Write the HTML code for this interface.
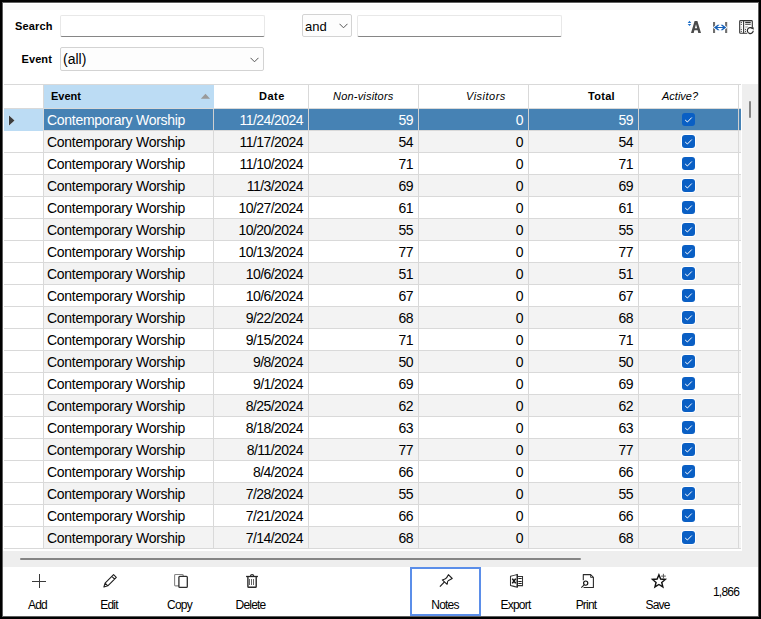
<!DOCTYPE html><html><head><meta charset="utf-8"><style>
*{margin:0;padding:0;box-sizing:border-box}
html,body{width:761px;height:619px;overflow:hidden;background:#000}
body{position:relative;font-family:"Liberation Sans",sans-serif;color:#000}
.d{position:absolute}
.t{position:absolute;white-space:nowrap;line-height:1}
.r{text-align:right}
.c{text-align:center}
</style></head><body>
<div class="d" style="left:2px;top:2px;width:757px;height:615px;background:#5e5e5e"></div>
<div class="d" style="left:3px;top:3px;width:755px;height:613px;background:#fff"></div>
<div class="d" style="left:4px;top:4px;width:753px;height:6px;background:#f8f8f8"></div>

<div class="t" style="left:15px;top:20px;font:bold 11px 'Liberation Sans';letter-spacing:0.15px">Search</div>
<div class="t" style="left:21.5px;top:53px;font:bold 11px 'Liberation Sans';letter-spacing:0.1px">Event</div>
<div class="d" style="left:60px;top:15px;width:205px;height:22px;border:1px solid #e8e8e8;border-bottom:1px solid #868686;border-radius:2px;background:#fff"></div>
<div class="d" style="left:357px;top:15px;width:205px;height:22px;border:1px solid #e8e8e8;border-bottom:1px solid #868686;border-radius:2px;background:#fff"></div>
<div class="d" style="left:302px;top:14px;width:50px;height:23px;border:1px solid #d3d3d3;border-radius:2px;background:#fdfdfd"></div>
<div class="d" style="left:60px;top:47px;width:204px;height:24px;border:1px solid #d3d3d3;border-radius:2px;background:#fdfdfd"></div>
<svg class="d" style="left:338.5px;top:23px" width="9" height="6" viewBox="0 0 9 6"><path d="M0.5 0.8 L4.5 4.8 L8.5 0.8" fill="none" stroke="#555" stroke-width="1"/></svg>
<svg class="d" style="left:250.25px;top:57px" width="9" height="6" viewBox="0 0 9 6"><path d="M0.5 0.8 L4.5 4.8 L8.5 0.8" fill="none" stroke="#555" stroke-width="1"/></svg>
<div class="t" style="left:305px;top:19px;font:13px 'Liberation Sans'">and</div>
<div class="t" style="left:63px;top:51px;font:14px 'Liberation Sans'">(all)</div>
<svg class="d" style="left:684px;top:16px" width="20" height="20" viewBox="684 16 20 20"><path d="M687.7 22.9 L689.5 20.7 L691.3 22.9 Z M687.7 24.0 L691.3 24.0 L689.5 26.1 Z" fill="#1f6fc8"/><path fill-rule="evenodd" d="M691 33 L694.6 21.1 H697.4 L701 33 H698.3 L697.6 30.3 H694.4 L693.7 33 Z M694.9 28.3 H697.1 L696 24.2 Z" fill="#4a4a4a"/></svg>
<svg class="d" style="left:710px;top:19px" width="20" height="16" viewBox="710 19 20 16"><rect x="713" y="22" width="2.1" height="11" fill="#6e6e6e"/><rect x="725.1" y="22" width="2.1" height="11" fill="#6e6e6e"/><path d="M713.9 27.5 L717.7 24.8 H719.6 L717.1 26.9 H723.1 L720.6 24.8 H722.5 L726.3 27.5 L722.5 30.2 H720.6 L723.1 28.1 H717.1 L719.6 30.2 H717.7 Z" fill="#1560b8" stroke="#fff" stroke-width="1.6" stroke-linejoin="round" paint-order="stroke"/></svg>
<svg class="d" style="left:736px;top:17px" width="20" height="20" viewBox="736 17 20 20"><rect x="739.7" y="20.6" width="12.6" height="12.7" rx="0.8" fill="none" stroke="#333" stroke-width="1.1"/><path d="M743.6 20.6 V33.3" stroke="#333" stroke-width="1.1"/><path d="M741.3 22.4 h0.01 M741.3 24.3 h0.01 M741.3 29.3 h0.01 M741.3 31.3 h0.01 M745.5 29.3 h0.01 M745.5 31.3 h0.01" stroke="#333" stroke-width="1.2" stroke-linecap="round"/><path d="M741.3 27 h0.01" stroke="#aaa" stroke-width="1.1" stroke-linecap="round"/><path d="M745.2 22.4 H750.7 M745.2 24.3 H750.7" stroke="#333" stroke-width="1.1"/><path d="M745.2 27 H748" stroke="#999" stroke-width="1"/><circle cx="750.3" cy="30.8" r="4" fill="#fff"/><path d="M752.4 28.5 A2.95 2.95 0 1 0 753.25 30.8" fill="none" stroke="#2a2a2a" stroke-width="1.25"/><path d="M751.3 27.3 L753.7 27.6 L753.4 30 Z" fill="#111"/></svg>
<div class="d" style="left:4px;top:84px;width:737px;height:1px;background:#d9d9d9"></div>
<div class="d" style="left:44px;top:85px;width:170px;height:23px;background:#bcdcf4"></div>
<div class="d" style="left:43px;top:85px;width:1px;height:23px;background:#d9d9d9"></div>
<div class="d" style="left:308px;top:85px;width:1px;height:23px;background:#d9d9d9"></div>
<div class="d" style="left:418px;top:85px;width:1px;height:23px;background:#d9d9d9"></div>
<div class="d" style="left:528px;top:85px;width:1px;height:23px;background:#d9d9d9"></div>
<div class="d" style="left:638px;top:85px;width:1px;height:23px;background:#d9d9d9"></div>
<div class="d" style="left:738px;top:85px;width:1px;height:23px;background:#d9d9d9"></div>
<div class="d" style="left:4px;top:108px;width:737px;height:1px;background:#d9d9d9"></div>
<div class="t" style="left:51px;top:90px;font:bold 11px 'Liberation Sans'">Event</div>
<svg class="d" style="left:199px;top:92px" width="14" height="9" viewBox="199 92 14 9"><path d="M200.8 98.8 L205.45 93.8 L210.1 98.8 Z" fill="#9a9a9a"/></svg>
<div class="t" style="left:259px;top:90px;font:bold 11px 'Liberation Sans';letter-spacing:0.5px">Date</div>
<div class="t" style="left:333px;top:90px;font:italic 11px 'Liberation Sans';letter-spacing:0.2px">Non-visitors</div>
<div class="t" style="left:466px;top:90px;font:italic 11px 'Liberation Sans';letter-spacing:0.5px">Visitors</div>
<div class="t" style="left:588px;top:90px;font:bold 11px 'Liberation Sans';letter-spacing:0.3px">Total</div>
<div class="t" style="left:662px;top:90px;font:italic 11px 'Liberation Sans'">Active?</div>
<div class="d" style="left:4px;top:109px;width:39px;height:22px;background:#bcdcf4"></div>
<div class="d" style="left:44px;top:109px;width:697px;height:21px;background:#4682b4"></div>
<svg class="d" style="left:8px;top:115px" width="8" height="11" viewBox="0 0 8 11"><path d="M1 0.5 L6.5 5.5 L1 10.5 Z" fill="#3c3c3c" stroke="#fff" stroke-width="0.7" stroke-opacity="0.6" paint-order="stroke"/></svg>
<div class="d" style="left:4px;top:130px;width:737px;height:1px;background:#d9d9d9"></div>
<div class="d" style="left:4px;top:130px;width:39px;height:1px;background:#bcdcf4"></div>
<div class="d" style="left:43px;top:109px;width:1px;height:21px;background:#d9d9d9"></div>
<div class="d" style="left:213px;top:109px;width:1px;height:21px;background:#d0d0d0"></div>
<div class="d" style="left:308px;top:109px;width:1px;height:21px;background:#d0d0d0"></div>
<div class="d" style="left:418px;top:109px;width:1px;height:21px;background:#d0d0d0"></div>
<div class="d" style="left:528px;top:109px;width:1px;height:21px;background:#d0d0d0"></div>
<div class="d" style="left:638px;top:109px;width:1px;height:21px;background:#d0d0d0"></div>
<div class="d" style="left:738px;top:109px;width:1px;height:21px;background:#d0d0d0"></div>
<div class="t" style="left:47px;top:112px;font:14px 'Liberation Sans';letter-spacing:-0.28px;color:#fff">Contemporary Worship</div>
<div class="t r" style="right:458px;top:112px;font:14px 'Liberation Sans';letter-spacing:-0.55px;color:#fff">11/24/2024</div>
<div class="t r" style="right:348px;top:112px;font:14px 'Liberation Sans';letter-spacing:-0.55px;color:#fff">59</div>
<div class="t r" style="right:238px;top:112px;font:14px 'Liberation Sans';letter-spacing:-0.55px;color:#fff">0</div>
<div class="t r" style="right:128px;top:112px;font:14px 'Liberation Sans';letter-spacing:-0.55px;color:#fff">59</div>
<div class="d" style="left:682px;top:113px;width:13px;height:13px;border-radius:3px;background:#0a5fc4;"></div>
<svg class="d" style="left:682px;top:113px" width="13" height="13" viewBox="0 0 13 13"><path d="M3.2 7 L5.4 9 L9.8 4.5" fill="none" stroke="#fff" stroke-width="1"/></svg>
<div class="d" style="left:44px;top:131px;width:697px;height:21px;background:#f3f3f3"></div>
<div class="d" style="left:4px;top:152px;width:737px;height:1px;background:#d9d9d9"></div>
<div class="d" style="left:43px;top:131px;width:1px;height:21px;background:#d9d9d9"></div>
<div class="d" style="left:213px;top:131px;width:1px;height:21px;background:#d9d9d9"></div>
<div class="d" style="left:308px;top:131px;width:1px;height:21px;background:#d9d9d9"></div>
<div class="d" style="left:418px;top:131px;width:1px;height:21px;background:#d9d9d9"></div>
<div class="d" style="left:528px;top:131px;width:1px;height:21px;background:#d9d9d9"></div>
<div class="d" style="left:638px;top:131px;width:1px;height:21px;background:#d9d9d9"></div>
<div class="d" style="left:738px;top:131px;width:1px;height:21px;background:#d9d9d9"></div>
<div class="t" style="left:47px;top:134px;font:14px 'Liberation Sans';letter-spacing:-0.28px;color:#000">Contemporary Worship</div>
<div class="t r" style="right:458px;top:134px;font:14px 'Liberation Sans';letter-spacing:-0.55px;color:#000">11/17/2024</div>
<div class="t r" style="right:348px;top:134px;font:14px 'Liberation Sans';letter-spacing:-0.55px;color:#000">54</div>
<div class="t r" style="right:238px;top:134px;font:14px 'Liberation Sans';letter-spacing:-0.55px;color:#000">0</div>
<div class="t r" style="right:128px;top:134px;font:14px 'Liberation Sans';letter-spacing:-0.55px;color:#000">54</div>
<div class="d" style="left:682px;top:135px;width:13px;height:13px;border-radius:3px;background:#0a5fc4;box-shadow:0 0 0 1px #fff;"></div>
<svg class="d" style="left:682px;top:135px" width="13" height="13" viewBox="0 0 13 13"><path d="M3.2 7 L5.4 9 L9.8 4.5" fill="none" stroke="#fff" stroke-width="1"/></svg>
<div class="d" style="left:4px;top:174px;width:737px;height:1px;background:#d9d9d9"></div>
<div class="d" style="left:43px;top:153px;width:1px;height:21px;background:#d9d9d9"></div>
<div class="d" style="left:213px;top:153px;width:1px;height:21px;background:#d9d9d9"></div>
<div class="d" style="left:308px;top:153px;width:1px;height:21px;background:#d9d9d9"></div>
<div class="d" style="left:418px;top:153px;width:1px;height:21px;background:#d9d9d9"></div>
<div class="d" style="left:528px;top:153px;width:1px;height:21px;background:#d9d9d9"></div>
<div class="d" style="left:638px;top:153px;width:1px;height:21px;background:#d9d9d9"></div>
<div class="d" style="left:738px;top:153px;width:1px;height:21px;background:#d9d9d9"></div>
<div class="t" style="left:47px;top:156px;font:14px 'Liberation Sans';letter-spacing:-0.28px;color:#000">Contemporary Worship</div>
<div class="t r" style="right:458px;top:156px;font:14px 'Liberation Sans';letter-spacing:-0.55px;color:#000">11/10/2024</div>
<div class="t r" style="right:348px;top:156px;font:14px 'Liberation Sans';letter-spacing:-0.55px;color:#000">71</div>
<div class="t r" style="right:238px;top:156px;font:14px 'Liberation Sans';letter-spacing:-0.55px;color:#000">0</div>
<div class="t r" style="right:128px;top:156px;font:14px 'Liberation Sans';letter-spacing:-0.55px;color:#000">71</div>
<div class="d" style="left:682px;top:157px;width:13px;height:13px;border-radius:3px;background:#0a5fc4;box-shadow:0 0 0 1px #fff;"></div>
<svg class="d" style="left:682px;top:157px" width="13" height="13" viewBox="0 0 13 13"><path d="M3.2 7 L5.4 9 L9.8 4.5" fill="none" stroke="#fff" stroke-width="1"/></svg>
<div class="d" style="left:44px;top:175px;width:697px;height:21px;background:#f3f3f3"></div>
<div class="d" style="left:4px;top:196px;width:737px;height:1px;background:#d9d9d9"></div>
<div class="d" style="left:43px;top:175px;width:1px;height:21px;background:#d9d9d9"></div>
<div class="d" style="left:213px;top:175px;width:1px;height:21px;background:#d9d9d9"></div>
<div class="d" style="left:308px;top:175px;width:1px;height:21px;background:#d9d9d9"></div>
<div class="d" style="left:418px;top:175px;width:1px;height:21px;background:#d9d9d9"></div>
<div class="d" style="left:528px;top:175px;width:1px;height:21px;background:#d9d9d9"></div>
<div class="d" style="left:638px;top:175px;width:1px;height:21px;background:#d9d9d9"></div>
<div class="d" style="left:738px;top:175px;width:1px;height:21px;background:#d9d9d9"></div>
<div class="t" style="left:47px;top:178px;font:14px 'Liberation Sans';letter-spacing:-0.28px;color:#000">Contemporary Worship</div>
<div class="t r" style="right:458px;top:178px;font:14px 'Liberation Sans';letter-spacing:-0.55px;color:#000">11/3/2024</div>
<div class="t r" style="right:348px;top:178px;font:14px 'Liberation Sans';letter-spacing:-0.55px;color:#000">69</div>
<div class="t r" style="right:238px;top:178px;font:14px 'Liberation Sans';letter-spacing:-0.55px;color:#000">0</div>
<div class="t r" style="right:128px;top:178px;font:14px 'Liberation Sans';letter-spacing:-0.55px;color:#000">69</div>
<div class="d" style="left:682px;top:179px;width:13px;height:13px;border-radius:3px;background:#0a5fc4;box-shadow:0 0 0 1px #fff;"></div>
<svg class="d" style="left:682px;top:179px" width="13" height="13" viewBox="0 0 13 13"><path d="M3.2 7 L5.4 9 L9.8 4.5" fill="none" stroke="#fff" stroke-width="1"/></svg>
<div class="d" style="left:4px;top:218px;width:737px;height:1px;background:#d9d9d9"></div>
<div class="d" style="left:43px;top:197px;width:1px;height:21px;background:#d9d9d9"></div>
<div class="d" style="left:213px;top:197px;width:1px;height:21px;background:#d9d9d9"></div>
<div class="d" style="left:308px;top:197px;width:1px;height:21px;background:#d9d9d9"></div>
<div class="d" style="left:418px;top:197px;width:1px;height:21px;background:#d9d9d9"></div>
<div class="d" style="left:528px;top:197px;width:1px;height:21px;background:#d9d9d9"></div>
<div class="d" style="left:638px;top:197px;width:1px;height:21px;background:#d9d9d9"></div>
<div class="d" style="left:738px;top:197px;width:1px;height:21px;background:#d9d9d9"></div>
<div class="t" style="left:47px;top:200px;font:14px 'Liberation Sans';letter-spacing:-0.28px;color:#000">Contemporary Worship</div>
<div class="t r" style="right:458px;top:200px;font:14px 'Liberation Sans';letter-spacing:-0.55px;color:#000">10/27/2024</div>
<div class="t r" style="right:348px;top:200px;font:14px 'Liberation Sans';letter-spacing:-0.55px;color:#000">61</div>
<div class="t r" style="right:238px;top:200px;font:14px 'Liberation Sans';letter-spacing:-0.55px;color:#000">0</div>
<div class="t r" style="right:128px;top:200px;font:14px 'Liberation Sans';letter-spacing:-0.55px;color:#000">61</div>
<div class="d" style="left:682px;top:201px;width:13px;height:13px;border-radius:3px;background:#0a5fc4;box-shadow:0 0 0 1px #fff;"></div>
<svg class="d" style="left:682px;top:201px" width="13" height="13" viewBox="0 0 13 13"><path d="M3.2 7 L5.4 9 L9.8 4.5" fill="none" stroke="#fff" stroke-width="1"/></svg>
<div class="d" style="left:44px;top:219px;width:697px;height:21px;background:#f3f3f3"></div>
<div class="d" style="left:4px;top:240px;width:737px;height:1px;background:#d9d9d9"></div>
<div class="d" style="left:43px;top:219px;width:1px;height:21px;background:#d9d9d9"></div>
<div class="d" style="left:213px;top:219px;width:1px;height:21px;background:#d9d9d9"></div>
<div class="d" style="left:308px;top:219px;width:1px;height:21px;background:#d9d9d9"></div>
<div class="d" style="left:418px;top:219px;width:1px;height:21px;background:#d9d9d9"></div>
<div class="d" style="left:528px;top:219px;width:1px;height:21px;background:#d9d9d9"></div>
<div class="d" style="left:638px;top:219px;width:1px;height:21px;background:#d9d9d9"></div>
<div class="d" style="left:738px;top:219px;width:1px;height:21px;background:#d9d9d9"></div>
<div class="t" style="left:47px;top:222px;font:14px 'Liberation Sans';letter-spacing:-0.28px;color:#000">Contemporary Worship</div>
<div class="t r" style="right:458px;top:222px;font:14px 'Liberation Sans';letter-spacing:-0.55px;color:#000">10/20/2024</div>
<div class="t r" style="right:348px;top:222px;font:14px 'Liberation Sans';letter-spacing:-0.55px;color:#000">55</div>
<div class="t r" style="right:238px;top:222px;font:14px 'Liberation Sans';letter-spacing:-0.55px;color:#000">0</div>
<div class="t r" style="right:128px;top:222px;font:14px 'Liberation Sans';letter-spacing:-0.55px;color:#000">55</div>
<div class="d" style="left:682px;top:223px;width:13px;height:13px;border-radius:3px;background:#0a5fc4;box-shadow:0 0 0 1px #fff;"></div>
<svg class="d" style="left:682px;top:223px" width="13" height="13" viewBox="0 0 13 13"><path d="M3.2 7 L5.4 9 L9.8 4.5" fill="none" stroke="#fff" stroke-width="1"/></svg>
<div class="d" style="left:4px;top:262px;width:737px;height:1px;background:#d9d9d9"></div>
<div class="d" style="left:43px;top:241px;width:1px;height:21px;background:#d9d9d9"></div>
<div class="d" style="left:213px;top:241px;width:1px;height:21px;background:#d9d9d9"></div>
<div class="d" style="left:308px;top:241px;width:1px;height:21px;background:#d9d9d9"></div>
<div class="d" style="left:418px;top:241px;width:1px;height:21px;background:#d9d9d9"></div>
<div class="d" style="left:528px;top:241px;width:1px;height:21px;background:#d9d9d9"></div>
<div class="d" style="left:638px;top:241px;width:1px;height:21px;background:#d9d9d9"></div>
<div class="d" style="left:738px;top:241px;width:1px;height:21px;background:#d9d9d9"></div>
<div class="t" style="left:47px;top:244px;font:14px 'Liberation Sans';letter-spacing:-0.28px;color:#000">Contemporary Worship</div>
<div class="t r" style="right:458px;top:244px;font:14px 'Liberation Sans';letter-spacing:-0.55px;color:#000">10/13/2024</div>
<div class="t r" style="right:348px;top:244px;font:14px 'Liberation Sans';letter-spacing:-0.55px;color:#000">77</div>
<div class="t r" style="right:238px;top:244px;font:14px 'Liberation Sans';letter-spacing:-0.55px;color:#000">0</div>
<div class="t r" style="right:128px;top:244px;font:14px 'Liberation Sans';letter-spacing:-0.55px;color:#000">77</div>
<div class="d" style="left:682px;top:245px;width:13px;height:13px;border-radius:3px;background:#0a5fc4;box-shadow:0 0 0 1px #fff;"></div>
<svg class="d" style="left:682px;top:245px" width="13" height="13" viewBox="0 0 13 13"><path d="M3.2 7 L5.4 9 L9.8 4.5" fill="none" stroke="#fff" stroke-width="1"/></svg>
<div class="d" style="left:44px;top:263px;width:697px;height:21px;background:#f3f3f3"></div>
<div class="d" style="left:4px;top:284px;width:737px;height:1px;background:#d9d9d9"></div>
<div class="d" style="left:43px;top:263px;width:1px;height:21px;background:#d9d9d9"></div>
<div class="d" style="left:213px;top:263px;width:1px;height:21px;background:#d9d9d9"></div>
<div class="d" style="left:308px;top:263px;width:1px;height:21px;background:#d9d9d9"></div>
<div class="d" style="left:418px;top:263px;width:1px;height:21px;background:#d9d9d9"></div>
<div class="d" style="left:528px;top:263px;width:1px;height:21px;background:#d9d9d9"></div>
<div class="d" style="left:638px;top:263px;width:1px;height:21px;background:#d9d9d9"></div>
<div class="d" style="left:738px;top:263px;width:1px;height:21px;background:#d9d9d9"></div>
<div class="t" style="left:47px;top:266px;font:14px 'Liberation Sans';letter-spacing:-0.28px;color:#000">Contemporary Worship</div>
<div class="t r" style="right:458px;top:266px;font:14px 'Liberation Sans';letter-spacing:-0.55px;color:#000">10/6/2024</div>
<div class="t r" style="right:348px;top:266px;font:14px 'Liberation Sans';letter-spacing:-0.55px;color:#000">51</div>
<div class="t r" style="right:238px;top:266px;font:14px 'Liberation Sans';letter-spacing:-0.55px;color:#000">0</div>
<div class="t r" style="right:128px;top:266px;font:14px 'Liberation Sans';letter-spacing:-0.55px;color:#000">51</div>
<div class="d" style="left:682px;top:267px;width:13px;height:13px;border-radius:3px;background:#0a5fc4;box-shadow:0 0 0 1px #fff;"></div>
<svg class="d" style="left:682px;top:267px" width="13" height="13" viewBox="0 0 13 13"><path d="M3.2 7 L5.4 9 L9.8 4.5" fill="none" stroke="#fff" stroke-width="1"/></svg>
<div class="d" style="left:4px;top:306px;width:737px;height:1px;background:#d9d9d9"></div>
<div class="d" style="left:43px;top:285px;width:1px;height:21px;background:#d9d9d9"></div>
<div class="d" style="left:213px;top:285px;width:1px;height:21px;background:#d9d9d9"></div>
<div class="d" style="left:308px;top:285px;width:1px;height:21px;background:#d9d9d9"></div>
<div class="d" style="left:418px;top:285px;width:1px;height:21px;background:#d9d9d9"></div>
<div class="d" style="left:528px;top:285px;width:1px;height:21px;background:#d9d9d9"></div>
<div class="d" style="left:638px;top:285px;width:1px;height:21px;background:#d9d9d9"></div>
<div class="d" style="left:738px;top:285px;width:1px;height:21px;background:#d9d9d9"></div>
<div class="t" style="left:47px;top:288px;font:14px 'Liberation Sans';letter-spacing:-0.28px;color:#000">Contemporary Worship</div>
<div class="t r" style="right:458px;top:288px;font:14px 'Liberation Sans';letter-spacing:-0.55px;color:#000">10/6/2024</div>
<div class="t r" style="right:348px;top:288px;font:14px 'Liberation Sans';letter-spacing:-0.55px;color:#000">67</div>
<div class="t r" style="right:238px;top:288px;font:14px 'Liberation Sans';letter-spacing:-0.55px;color:#000">0</div>
<div class="t r" style="right:128px;top:288px;font:14px 'Liberation Sans';letter-spacing:-0.55px;color:#000">67</div>
<div class="d" style="left:682px;top:289px;width:13px;height:13px;border-radius:3px;background:#0a5fc4;box-shadow:0 0 0 1px #fff;"></div>
<svg class="d" style="left:682px;top:289px" width="13" height="13" viewBox="0 0 13 13"><path d="M3.2 7 L5.4 9 L9.8 4.5" fill="none" stroke="#fff" stroke-width="1"/></svg>
<div class="d" style="left:44px;top:307px;width:697px;height:21px;background:#f3f3f3"></div>
<div class="d" style="left:4px;top:328px;width:737px;height:1px;background:#d9d9d9"></div>
<div class="d" style="left:43px;top:307px;width:1px;height:21px;background:#d9d9d9"></div>
<div class="d" style="left:213px;top:307px;width:1px;height:21px;background:#d9d9d9"></div>
<div class="d" style="left:308px;top:307px;width:1px;height:21px;background:#d9d9d9"></div>
<div class="d" style="left:418px;top:307px;width:1px;height:21px;background:#d9d9d9"></div>
<div class="d" style="left:528px;top:307px;width:1px;height:21px;background:#d9d9d9"></div>
<div class="d" style="left:638px;top:307px;width:1px;height:21px;background:#d9d9d9"></div>
<div class="d" style="left:738px;top:307px;width:1px;height:21px;background:#d9d9d9"></div>
<div class="t" style="left:47px;top:310px;font:14px 'Liberation Sans';letter-spacing:-0.28px;color:#000">Contemporary Worship</div>
<div class="t r" style="right:458px;top:310px;font:14px 'Liberation Sans';letter-spacing:-0.55px;color:#000">9/22/2024</div>
<div class="t r" style="right:348px;top:310px;font:14px 'Liberation Sans';letter-spacing:-0.55px;color:#000">68</div>
<div class="t r" style="right:238px;top:310px;font:14px 'Liberation Sans';letter-spacing:-0.55px;color:#000">0</div>
<div class="t r" style="right:128px;top:310px;font:14px 'Liberation Sans';letter-spacing:-0.55px;color:#000">68</div>
<div class="d" style="left:682px;top:311px;width:13px;height:13px;border-radius:3px;background:#0a5fc4;box-shadow:0 0 0 1px #fff;"></div>
<svg class="d" style="left:682px;top:311px" width="13" height="13" viewBox="0 0 13 13"><path d="M3.2 7 L5.4 9 L9.8 4.5" fill="none" stroke="#fff" stroke-width="1"/></svg>
<div class="d" style="left:4px;top:350px;width:737px;height:1px;background:#d9d9d9"></div>
<div class="d" style="left:43px;top:329px;width:1px;height:21px;background:#d9d9d9"></div>
<div class="d" style="left:213px;top:329px;width:1px;height:21px;background:#d9d9d9"></div>
<div class="d" style="left:308px;top:329px;width:1px;height:21px;background:#d9d9d9"></div>
<div class="d" style="left:418px;top:329px;width:1px;height:21px;background:#d9d9d9"></div>
<div class="d" style="left:528px;top:329px;width:1px;height:21px;background:#d9d9d9"></div>
<div class="d" style="left:638px;top:329px;width:1px;height:21px;background:#d9d9d9"></div>
<div class="d" style="left:738px;top:329px;width:1px;height:21px;background:#d9d9d9"></div>
<div class="t" style="left:47px;top:332px;font:14px 'Liberation Sans';letter-spacing:-0.28px;color:#000">Contemporary Worship</div>
<div class="t r" style="right:458px;top:332px;font:14px 'Liberation Sans';letter-spacing:-0.55px;color:#000">9/15/2024</div>
<div class="t r" style="right:348px;top:332px;font:14px 'Liberation Sans';letter-spacing:-0.55px;color:#000">71</div>
<div class="t r" style="right:238px;top:332px;font:14px 'Liberation Sans';letter-spacing:-0.55px;color:#000">0</div>
<div class="t r" style="right:128px;top:332px;font:14px 'Liberation Sans';letter-spacing:-0.55px;color:#000">71</div>
<div class="d" style="left:682px;top:333px;width:13px;height:13px;border-radius:3px;background:#0a5fc4;box-shadow:0 0 0 1px #fff;"></div>
<svg class="d" style="left:682px;top:333px" width="13" height="13" viewBox="0 0 13 13"><path d="M3.2 7 L5.4 9 L9.8 4.5" fill="none" stroke="#fff" stroke-width="1"/></svg>
<div class="d" style="left:44px;top:351px;width:697px;height:21px;background:#f3f3f3"></div>
<div class="d" style="left:4px;top:372px;width:737px;height:1px;background:#d9d9d9"></div>
<div class="d" style="left:43px;top:351px;width:1px;height:21px;background:#d9d9d9"></div>
<div class="d" style="left:213px;top:351px;width:1px;height:21px;background:#d9d9d9"></div>
<div class="d" style="left:308px;top:351px;width:1px;height:21px;background:#d9d9d9"></div>
<div class="d" style="left:418px;top:351px;width:1px;height:21px;background:#d9d9d9"></div>
<div class="d" style="left:528px;top:351px;width:1px;height:21px;background:#d9d9d9"></div>
<div class="d" style="left:638px;top:351px;width:1px;height:21px;background:#d9d9d9"></div>
<div class="d" style="left:738px;top:351px;width:1px;height:21px;background:#d9d9d9"></div>
<div class="t" style="left:47px;top:354px;font:14px 'Liberation Sans';letter-spacing:-0.28px;color:#000">Contemporary Worship</div>
<div class="t r" style="right:458px;top:354px;font:14px 'Liberation Sans';letter-spacing:-0.55px;color:#000">9/8/2024</div>
<div class="t r" style="right:348px;top:354px;font:14px 'Liberation Sans';letter-spacing:-0.55px;color:#000">50</div>
<div class="t r" style="right:238px;top:354px;font:14px 'Liberation Sans';letter-spacing:-0.55px;color:#000">0</div>
<div class="t r" style="right:128px;top:354px;font:14px 'Liberation Sans';letter-spacing:-0.55px;color:#000">50</div>
<div class="d" style="left:682px;top:355px;width:13px;height:13px;border-radius:3px;background:#0a5fc4;box-shadow:0 0 0 1px #fff;"></div>
<svg class="d" style="left:682px;top:355px" width="13" height="13" viewBox="0 0 13 13"><path d="M3.2 7 L5.4 9 L9.8 4.5" fill="none" stroke="#fff" stroke-width="1"/></svg>
<div class="d" style="left:4px;top:394px;width:737px;height:1px;background:#d9d9d9"></div>
<div class="d" style="left:43px;top:373px;width:1px;height:21px;background:#d9d9d9"></div>
<div class="d" style="left:213px;top:373px;width:1px;height:21px;background:#d9d9d9"></div>
<div class="d" style="left:308px;top:373px;width:1px;height:21px;background:#d9d9d9"></div>
<div class="d" style="left:418px;top:373px;width:1px;height:21px;background:#d9d9d9"></div>
<div class="d" style="left:528px;top:373px;width:1px;height:21px;background:#d9d9d9"></div>
<div class="d" style="left:638px;top:373px;width:1px;height:21px;background:#d9d9d9"></div>
<div class="d" style="left:738px;top:373px;width:1px;height:21px;background:#d9d9d9"></div>
<div class="t" style="left:47px;top:376px;font:14px 'Liberation Sans';letter-spacing:-0.28px;color:#000">Contemporary Worship</div>
<div class="t r" style="right:458px;top:376px;font:14px 'Liberation Sans';letter-spacing:-0.55px;color:#000">9/1/2024</div>
<div class="t r" style="right:348px;top:376px;font:14px 'Liberation Sans';letter-spacing:-0.55px;color:#000">69</div>
<div class="t r" style="right:238px;top:376px;font:14px 'Liberation Sans';letter-spacing:-0.55px;color:#000">0</div>
<div class="t r" style="right:128px;top:376px;font:14px 'Liberation Sans';letter-spacing:-0.55px;color:#000">69</div>
<div class="d" style="left:682px;top:377px;width:13px;height:13px;border-radius:3px;background:#0a5fc4;box-shadow:0 0 0 1px #fff;"></div>
<svg class="d" style="left:682px;top:377px" width="13" height="13" viewBox="0 0 13 13"><path d="M3.2 7 L5.4 9 L9.8 4.5" fill="none" stroke="#fff" stroke-width="1"/></svg>
<div class="d" style="left:44px;top:395px;width:697px;height:21px;background:#f3f3f3"></div>
<div class="d" style="left:4px;top:416px;width:737px;height:1px;background:#d9d9d9"></div>
<div class="d" style="left:43px;top:395px;width:1px;height:21px;background:#d9d9d9"></div>
<div class="d" style="left:213px;top:395px;width:1px;height:21px;background:#d9d9d9"></div>
<div class="d" style="left:308px;top:395px;width:1px;height:21px;background:#d9d9d9"></div>
<div class="d" style="left:418px;top:395px;width:1px;height:21px;background:#d9d9d9"></div>
<div class="d" style="left:528px;top:395px;width:1px;height:21px;background:#d9d9d9"></div>
<div class="d" style="left:638px;top:395px;width:1px;height:21px;background:#d9d9d9"></div>
<div class="d" style="left:738px;top:395px;width:1px;height:21px;background:#d9d9d9"></div>
<div class="t" style="left:47px;top:398px;font:14px 'Liberation Sans';letter-spacing:-0.28px;color:#000">Contemporary Worship</div>
<div class="t r" style="right:458px;top:398px;font:14px 'Liberation Sans';letter-spacing:-0.55px;color:#000">8/25/2024</div>
<div class="t r" style="right:348px;top:398px;font:14px 'Liberation Sans';letter-spacing:-0.55px;color:#000">62</div>
<div class="t r" style="right:238px;top:398px;font:14px 'Liberation Sans';letter-spacing:-0.55px;color:#000">0</div>
<div class="t r" style="right:128px;top:398px;font:14px 'Liberation Sans';letter-spacing:-0.55px;color:#000">62</div>
<div class="d" style="left:682px;top:399px;width:13px;height:13px;border-radius:3px;background:#0a5fc4;box-shadow:0 0 0 1px #fff;"></div>
<svg class="d" style="left:682px;top:399px" width="13" height="13" viewBox="0 0 13 13"><path d="M3.2 7 L5.4 9 L9.8 4.5" fill="none" stroke="#fff" stroke-width="1"/></svg>
<div class="d" style="left:4px;top:438px;width:737px;height:1px;background:#d9d9d9"></div>
<div class="d" style="left:43px;top:417px;width:1px;height:21px;background:#d9d9d9"></div>
<div class="d" style="left:213px;top:417px;width:1px;height:21px;background:#d9d9d9"></div>
<div class="d" style="left:308px;top:417px;width:1px;height:21px;background:#d9d9d9"></div>
<div class="d" style="left:418px;top:417px;width:1px;height:21px;background:#d9d9d9"></div>
<div class="d" style="left:528px;top:417px;width:1px;height:21px;background:#d9d9d9"></div>
<div class="d" style="left:638px;top:417px;width:1px;height:21px;background:#d9d9d9"></div>
<div class="d" style="left:738px;top:417px;width:1px;height:21px;background:#d9d9d9"></div>
<div class="t" style="left:47px;top:420px;font:14px 'Liberation Sans';letter-spacing:-0.28px;color:#000">Contemporary Worship</div>
<div class="t r" style="right:458px;top:420px;font:14px 'Liberation Sans';letter-spacing:-0.55px;color:#000">8/18/2024</div>
<div class="t r" style="right:348px;top:420px;font:14px 'Liberation Sans';letter-spacing:-0.55px;color:#000">63</div>
<div class="t r" style="right:238px;top:420px;font:14px 'Liberation Sans';letter-spacing:-0.55px;color:#000">0</div>
<div class="t r" style="right:128px;top:420px;font:14px 'Liberation Sans';letter-spacing:-0.55px;color:#000">63</div>
<div class="d" style="left:682px;top:421px;width:13px;height:13px;border-radius:3px;background:#0a5fc4;box-shadow:0 0 0 1px #fff;"></div>
<svg class="d" style="left:682px;top:421px" width="13" height="13" viewBox="0 0 13 13"><path d="M3.2 7 L5.4 9 L9.8 4.5" fill="none" stroke="#fff" stroke-width="1"/></svg>
<div class="d" style="left:44px;top:439px;width:697px;height:21px;background:#f3f3f3"></div>
<div class="d" style="left:4px;top:460px;width:737px;height:1px;background:#d9d9d9"></div>
<div class="d" style="left:43px;top:439px;width:1px;height:21px;background:#d9d9d9"></div>
<div class="d" style="left:213px;top:439px;width:1px;height:21px;background:#d9d9d9"></div>
<div class="d" style="left:308px;top:439px;width:1px;height:21px;background:#d9d9d9"></div>
<div class="d" style="left:418px;top:439px;width:1px;height:21px;background:#d9d9d9"></div>
<div class="d" style="left:528px;top:439px;width:1px;height:21px;background:#d9d9d9"></div>
<div class="d" style="left:638px;top:439px;width:1px;height:21px;background:#d9d9d9"></div>
<div class="d" style="left:738px;top:439px;width:1px;height:21px;background:#d9d9d9"></div>
<div class="t" style="left:47px;top:442px;font:14px 'Liberation Sans';letter-spacing:-0.28px;color:#000">Contemporary Worship</div>
<div class="t r" style="right:458px;top:442px;font:14px 'Liberation Sans';letter-spacing:-0.55px;color:#000">8/11/2024</div>
<div class="t r" style="right:348px;top:442px;font:14px 'Liberation Sans';letter-spacing:-0.55px;color:#000">77</div>
<div class="t r" style="right:238px;top:442px;font:14px 'Liberation Sans';letter-spacing:-0.55px;color:#000">0</div>
<div class="t r" style="right:128px;top:442px;font:14px 'Liberation Sans';letter-spacing:-0.55px;color:#000">77</div>
<div class="d" style="left:682px;top:443px;width:13px;height:13px;border-radius:3px;background:#0a5fc4;box-shadow:0 0 0 1px #fff;"></div>
<svg class="d" style="left:682px;top:443px" width="13" height="13" viewBox="0 0 13 13"><path d="M3.2 7 L5.4 9 L9.8 4.5" fill="none" stroke="#fff" stroke-width="1"/></svg>
<div class="d" style="left:4px;top:482px;width:737px;height:1px;background:#d9d9d9"></div>
<div class="d" style="left:43px;top:461px;width:1px;height:21px;background:#d9d9d9"></div>
<div class="d" style="left:213px;top:461px;width:1px;height:21px;background:#d9d9d9"></div>
<div class="d" style="left:308px;top:461px;width:1px;height:21px;background:#d9d9d9"></div>
<div class="d" style="left:418px;top:461px;width:1px;height:21px;background:#d9d9d9"></div>
<div class="d" style="left:528px;top:461px;width:1px;height:21px;background:#d9d9d9"></div>
<div class="d" style="left:638px;top:461px;width:1px;height:21px;background:#d9d9d9"></div>
<div class="d" style="left:738px;top:461px;width:1px;height:21px;background:#d9d9d9"></div>
<div class="t" style="left:47px;top:464px;font:14px 'Liberation Sans';letter-spacing:-0.28px;color:#000">Contemporary Worship</div>
<div class="t r" style="right:458px;top:464px;font:14px 'Liberation Sans';letter-spacing:-0.55px;color:#000">8/4/2024</div>
<div class="t r" style="right:348px;top:464px;font:14px 'Liberation Sans';letter-spacing:-0.55px;color:#000">66</div>
<div class="t r" style="right:238px;top:464px;font:14px 'Liberation Sans';letter-spacing:-0.55px;color:#000">0</div>
<div class="t r" style="right:128px;top:464px;font:14px 'Liberation Sans';letter-spacing:-0.55px;color:#000">66</div>
<div class="d" style="left:682px;top:465px;width:13px;height:13px;border-radius:3px;background:#0a5fc4;box-shadow:0 0 0 1px #fff;"></div>
<svg class="d" style="left:682px;top:465px" width="13" height="13" viewBox="0 0 13 13"><path d="M3.2 7 L5.4 9 L9.8 4.5" fill="none" stroke="#fff" stroke-width="1"/></svg>
<div class="d" style="left:44px;top:483px;width:697px;height:21px;background:#f3f3f3"></div>
<div class="d" style="left:4px;top:504px;width:737px;height:1px;background:#d9d9d9"></div>
<div class="d" style="left:43px;top:483px;width:1px;height:21px;background:#d9d9d9"></div>
<div class="d" style="left:213px;top:483px;width:1px;height:21px;background:#d9d9d9"></div>
<div class="d" style="left:308px;top:483px;width:1px;height:21px;background:#d9d9d9"></div>
<div class="d" style="left:418px;top:483px;width:1px;height:21px;background:#d9d9d9"></div>
<div class="d" style="left:528px;top:483px;width:1px;height:21px;background:#d9d9d9"></div>
<div class="d" style="left:638px;top:483px;width:1px;height:21px;background:#d9d9d9"></div>
<div class="d" style="left:738px;top:483px;width:1px;height:21px;background:#d9d9d9"></div>
<div class="t" style="left:47px;top:486px;font:14px 'Liberation Sans';letter-spacing:-0.28px;color:#000">Contemporary Worship</div>
<div class="t r" style="right:458px;top:486px;font:14px 'Liberation Sans';letter-spacing:-0.55px;color:#000">7/28/2024</div>
<div class="t r" style="right:348px;top:486px;font:14px 'Liberation Sans';letter-spacing:-0.55px;color:#000">55</div>
<div class="t r" style="right:238px;top:486px;font:14px 'Liberation Sans';letter-spacing:-0.55px;color:#000">0</div>
<div class="t r" style="right:128px;top:486px;font:14px 'Liberation Sans';letter-spacing:-0.55px;color:#000">55</div>
<div class="d" style="left:682px;top:487px;width:13px;height:13px;border-radius:3px;background:#0a5fc4;box-shadow:0 0 0 1px #fff;"></div>
<svg class="d" style="left:682px;top:487px" width="13" height="13" viewBox="0 0 13 13"><path d="M3.2 7 L5.4 9 L9.8 4.5" fill="none" stroke="#fff" stroke-width="1"/></svg>
<div class="d" style="left:4px;top:526px;width:737px;height:1px;background:#d9d9d9"></div>
<div class="d" style="left:43px;top:505px;width:1px;height:21px;background:#d9d9d9"></div>
<div class="d" style="left:213px;top:505px;width:1px;height:21px;background:#d9d9d9"></div>
<div class="d" style="left:308px;top:505px;width:1px;height:21px;background:#d9d9d9"></div>
<div class="d" style="left:418px;top:505px;width:1px;height:21px;background:#d9d9d9"></div>
<div class="d" style="left:528px;top:505px;width:1px;height:21px;background:#d9d9d9"></div>
<div class="d" style="left:638px;top:505px;width:1px;height:21px;background:#d9d9d9"></div>
<div class="d" style="left:738px;top:505px;width:1px;height:21px;background:#d9d9d9"></div>
<div class="t" style="left:47px;top:508px;font:14px 'Liberation Sans';letter-spacing:-0.28px;color:#000">Contemporary Worship</div>
<div class="t r" style="right:458px;top:508px;font:14px 'Liberation Sans';letter-spacing:-0.55px;color:#000">7/21/2024</div>
<div class="t r" style="right:348px;top:508px;font:14px 'Liberation Sans';letter-spacing:-0.55px;color:#000">66</div>
<div class="t r" style="right:238px;top:508px;font:14px 'Liberation Sans';letter-spacing:-0.55px;color:#000">0</div>
<div class="t r" style="right:128px;top:508px;font:14px 'Liberation Sans';letter-spacing:-0.55px;color:#000">66</div>
<div class="d" style="left:682px;top:509px;width:13px;height:13px;border-radius:3px;background:#0a5fc4;box-shadow:0 0 0 1px #fff;"></div>
<svg class="d" style="left:682px;top:509px" width="13" height="13" viewBox="0 0 13 13"><path d="M3.2 7 L5.4 9 L9.8 4.5" fill="none" stroke="#fff" stroke-width="1"/></svg>
<div class="d" style="left:44px;top:527px;width:697px;height:21px;background:#f3f3f3"></div>
<div class="d" style="left:4px;top:548px;width:737px;height:1px;background:#d9d9d9"></div>
<div class="d" style="left:43px;top:527px;width:1px;height:21px;background:#d9d9d9"></div>
<div class="d" style="left:213px;top:527px;width:1px;height:21px;background:#d9d9d9"></div>
<div class="d" style="left:308px;top:527px;width:1px;height:21px;background:#d9d9d9"></div>
<div class="d" style="left:418px;top:527px;width:1px;height:21px;background:#d9d9d9"></div>
<div class="d" style="left:528px;top:527px;width:1px;height:21px;background:#d9d9d9"></div>
<div class="d" style="left:638px;top:527px;width:1px;height:21px;background:#d9d9d9"></div>
<div class="d" style="left:738px;top:527px;width:1px;height:21px;background:#d9d9d9"></div>
<div class="t" style="left:47px;top:530px;font:14px 'Liberation Sans';letter-spacing:-0.28px;color:#000">Contemporary Worship</div>
<div class="t r" style="right:458px;top:530px;font:14px 'Liberation Sans';letter-spacing:-0.55px;color:#000">7/14/2024</div>
<div class="t r" style="right:348px;top:530px;font:14px 'Liberation Sans';letter-spacing:-0.55px;color:#000">68</div>
<div class="t r" style="right:238px;top:530px;font:14px 'Liberation Sans';letter-spacing:-0.55px;color:#000">0</div>
<div class="t r" style="right:128px;top:530px;font:14px 'Liberation Sans';letter-spacing:-0.55px;color:#000">68</div>
<div class="d" style="left:682px;top:531px;width:13px;height:13px;border-radius:3px;background:#0a5fc4;box-shadow:0 0 0 1px #fff;"></div>
<svg class="d" style="left:682px;top:531px" width="13" height="13" viewBox="0 0 13 13"><path d="M3.2 7 L5.4 9 L9.8 4.5" fill="none" stroke="#fff" stroke-width="1"/></svg>
<div class="d" style="left:742px;top:84px;width:16px;height:467px;background:#eeeeee"></div>
<div class="d" style="left:749px;top:101px;width:2px;height:17px;background:#858585;border-radius:1px"></div>
<div class="d" style="left:3px;top:551px;width:755px;height:16px;background:#eeeeee"></div>
<div class="d" style="left:20px;top:558px;width:561px;height:2px;background:#858585;border-radius:1px"></div>
<div class="d" style="left:410px;top:567px;width:71px;height:49px;border:2px solid #5b8ee9"></div>
<div class="t c" style="left:-2.5px;width:80px;top:598px;font:12px 'Liberation Sans';letter-spacing:-0.8px">Add</div>
<div class="t c" style="left:69px;width:80px;top:598px;font:12px 'Liberation Sans';letter-spacing:-0.8px">Edit</div>
<div class="t c" style="left:139.5px;width:80px;top:598px;font:12px 'Liberation Sans';letter-spacing:-0.8px">Copy</div>
<div class="t c" style="left:210.5px;width:80px;top:598px;font:12px 'Liberation Sans';letter-spacing:-0.8px">Delete</div>
<div class="t c" style="left:405px;width:80px;top:598px;font:12px 'Liberation Sans';letter-spacing:-0.8px">Notes</div>
<div class="t c" style="left:475.5px;width:80px;top:598px;font:12px 'Liberation Sans';letter-spacing:-0.8px">Export</div>
<div class="t c" style="left:546px;width:80px;top:598px;font:12px 'Liberation Sans';letter-spacing:-0.8px">Print</div>
<div class="t c" style="left:617.5px;width:80px;top:598px;font:12px 'Liberation Sans';letter-spacing:-0.8px">Save</div>
<div class="t" style="left:713px;top:585px;font:12px 'Liberation Sans';letter-spacing:-0.8px">1,866</div>
<svg class="d" style="left:28px;top:570px" width="20" height="22" viewBox="28 570 20 22"><path d="M39.5 574 V588 M32 581.5 H46" stroke="#3a3a3a" stroke-width="1"/></svg>
<svg class="d" style="left:98px;top:570px" width="24" height="22" viewBox="98 570 24 22"><path d="M103.90 587.00 L105.07 583.08 L113.55 574.59 L116.31 577.35 L107.82 585.83 Z M105.07 583.08 L107.82 585.83 M111.85 576.29 L114.61 579.05" fill="#fff" stroke="#1e1e1e" stroke-width="1.1" stroke-linejoin="round"/></svg>
<svg class="d" style="left:170px;top:570px" width="22" height="22" viewBox="170 570 22 22"><rect x="174.6" y="574.5" width="8.6" height="11.4" rx="0.9" fill="#fff" stroke="#858585" stroke-width="1.1"/><rect x="178.9" y="576.4" width="8.4" height="10.9" rx="0.9" fill="#fff" stroke="#2e2e2e" stroke-width="1.3"/></svg>
<svg class="d" style="left:242px;top:570px" width="20" height="22" viewBox="242 570 20 22"><path d="M246.1 576.5 H257.9" stroke="#222" stroke-width="1.3"/><path d="M250.5 576.4 V575.7 Q250.5 574.6 252.1 574.6 Q253.7 574.6 253.7 575.7 V576.4" fill="none" stroke="#2a2a2a" stroke-width="1.05"/><path d="M247.9 577 V586.5 Q247.9 587.3 248.7 587.3 H255.4 Q256.2 587.3 256.2 586.5 V577" fill="none" stroke="#2a2a2a" stroke-width="1.4"/><path d="M249.5 579 V585 M251.5 579 V585 M253.5 579 V585" stroke="#666" stroke-width="1"/></svg>
<svg class="d" style="left:434px;top:570px" width="24" height="22" viewBox="434 570 24 22"><path d="M448.4 574.7 L452.2 578.5 L448.6 580.4 Q447.4 581.2 447.4 582.6 L447.1 584.3 L442.3 579.9 L444.4 579.2 Q446.1 578.9 446.7 577.6 Z" fill="#fff" stroke="#1e1e1e" stroke-width="1.1" stroke-linejoin="round"/><path d="M444.5 581.9 L439.9 586.6" stroke="#1e1e1e" stroke-width="1.2"/></svg>
<svg class="d" style="left:505px;top:570px" width="24" height="22" viewBox="505 570 24 22"><path d="M510.5 576.3 Q514 575.2 517.3 574.4 V587.3 Q514 586.5 510.5 585.6 Z" fill="#fff" stroke="#333" stroke-width="1.05" stroke-linejoin="round"/><path d="M517.3 576.5 H522.5 V585.6 H517.3" fill="none" stroke="#333" stroke-width="1.05"/><path d="M517.3 574.4 V587.3" stroke="#222" stroke-width="1.3"/><path d="M518.3 578.5 H521.7 M518.3 581.5 H521.7 M518.3 583.5 H521.7" stroke="#222" stroke-width="1.1"/><path d="M512.3 578.6 L515.7 583.4 M515.7 578.6 L512.3 583.4" stroke="#111" stroke-width="1.6"/></svg>
<svg class="d" style="left:576px;top:570px" width="24" height="22" viewBox="576 570 24 22"><path d="M583.3 580.2 V574.6 H590.6 L593.4 577.4 V587.5 H583.6" fill="none" stroke="#2a2a2a" stroke-width="1.1" stroke-linejoin="round"/><path d="M590.6 574.6 V577.4 H593.4" fill="none" stroke="#333" stroke-width="0.9"/><circle cx="585.7" cy="583.1" r="2.1" fill="#fff" stroke="#111" stroke-width="1.15"/><path d="M584.2 584.8 L581.3 587.6" stroke="#222" stroke-width="1.1"/></svg>
<svg class="d" style="left:648px;top:570px" width="22" height="22" viewBox="648 570 22 22"><polygon points="658.90,574.80 660.66,579.07 665.27,579.43 661.75,582.43 662.84,586.92 658.90,584.50 654.96,586.92 656.05,582.43 652.53,579.43 657.14,579.07" fill="none" stroke="#111" stroke-width="1.45" stroke-linejoin="miter"/><path d="M663.4 573.8 V578.5 M661.1 576.1 H665.8" stroke="#555" stroke-width="1"/></svg>
</body></html>
